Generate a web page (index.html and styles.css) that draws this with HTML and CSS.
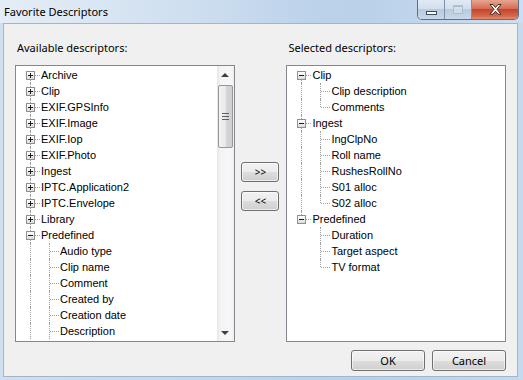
FILE: index.html
```html
<!DOCTYPE html>
<html lang="en">
<head>
    <meta charset="UTF-8">
    <title>Favorite Descriptors</title>
    <link rel="stylesheet" href="styles.css">
</head>
<body>

<div class="window">
    <div class="titlebar">
        <div class="title">Favorite Descriptors</div>
        <div class="caption-buttons">
            <div class="cap-btn cap-min"><span class="min-glyph"></span></div>
            <div class="cap-btn cap-max"><span class="max-glyph"></span></div>
            <div class="cap-btn cap-close">
                <svg width="15" height="13" viewBox="0 0 15 13">
                    <path d="M2 1.5h3l2.5 3 2.5-3h3l-4 4.8 4 4.9h-3l-2.5-3-2.5 3h-3l4-4.9z" fill="#fff" stroke="#4a2a24" stroke-width="1" stroke-linejoin="round"/>
                </svg>
            </div>
        </div>
    </div>

    <div class="client">
        <div class="columns">
            <div class="column">
                <div class="label">Available descriptors:</div>
                <div class="listbox">
                    <div class="tree">
                        <div class="row"><span class="c first"><i class="box plus"></i></span><span class="text">Archive</span></div>
                        <div class="row"><span class="c tee"><i class="box plus"></i></span><span class="text">Clip</span></div>
                        <div class="row"><span class="c tee"><i class="box plus"></i></span><span class="text">EXIF.GPSInfo</span></div>
                        <div class="row"><span class="c tee"><i class="box plus"></i></span><span class="text">EXIF.Image</span></div>
                        <div class="row"><span class="c tee"><i class="box plus"></i></span><span class="text">EXIF.Iop</span></div>
                        <div class="row"><span class="c tee"><i class="box plus"></i></span><span class="text">EXIF.Photo</span></div>
                        <div class="row"><span class="c tee"><i class="box plus"></i></span><span class="text">Ingest</span></div>
                        <div class="row"><span class="c tee"><i class="box plus"></i></span><span class="text">IPTC.Application2</span></div>
                        <div class="row"><span class="c tee"><i class="box plus"></i></span><span class="text">IPTC.Envelope</span></div>
                        <div class="row"><span class="c tee"><i class="box plus"></i></span><span class="text">Library</span></div>
                        <div class="row"><span class="c tee"><i class="box"></i></span><span class="text">Predefined</span></div>
                        <div class="row"><span class="c pipe"></span><span class="c tee"></span><span class="text">Audio type</span></div>
                        <div class="row"><span class="c pipe"></span><span class="c tee"></span><span class="text">Clip name</span></div>
                        <div class="row"><span class="c pipe"></span><span class="c tee"></span><span class="text">Comment</span></div>
                        <div class="row"><span class="c pipe"></span><span class="c tee"></span><span class="text">Created by</span></div>
                        <div class="row"><span class="c pipe"></span><span class="c tee"></span><span class="text">Creation date</span></div>
                        <div class="row"><span class="c pipe"></span><span class="c tee"></span><span class="text">Description</span></div>
                    </div>
                    <div class="scrollbar">
                        <div class="arrow"><span class="tri-up"></span></div>
                        <div class="track">
                            <div class="thumb"><span class="grip"></span></div>
                        </div>
                        <div class="arrow"><span class="tri-down"></span></div>
                    </div>
                </div>
            </div>

            <div class="middle">
                <button class="btn move-btn">&gt;&gt;</button>
                <button class="btn move-btn">&lt;&lt;</button>
            </div>

            <div class="column">
                <div class="label">Selected descriptors:</div>
                <div class="listbox">
                    <div class="tree">
                        <div class="row"><span class="c first"><i class="box"></i></span><span class="text">Clip</span></div>
                        <div class="row"><span class="c pipe"></span><span class="c tee"></span><span class="text">Clip description</span></div>
                        <div class="row"><span class="c pipe"></span><span class="c elbow"></span><span class="text">Comments</span></div>
                        <div class="row"><span class="c tee"><i class="box"></i></span><span class="text">Ingest</span></div>
                        <div class="row"><span class="c pipe"></span><span class="c tee"></span><span class="text">IngClpNo</span></div>
                        <div class="row"><span class="c pipe"></span><span class="c tee"></span><span class="text">Roll name</span></div>
                        <div class="row"><span class="c pipe"></span><span class="c tee"></span><span class="text">RushesRollNo</span></div>
                        <div class="row"><span class="c pipe"></span><span class="c tee"></span><span class="text">S01 alloc</span></div>
                        <div class="row"><span class="c pipe"></span><span class="c elbow"></span><span class="text">S02 alloc</span></div>
                        <div class="row"><span class="c elbow"><i class="box"></i></span><span class="text">Predefined</span></div>
                        <div class="row"><span class="c"></span><span class="c tee"></span><span class="text">Duration</span></div>
                        <div class="row"><span class="c"></span><span class="c tee"></span><span class="text">Target aspect</span></div>
                        <div class="row"><span class="c"></span><span class="c elbow"></span><span class="text">TV format</span></div>
                    </div>
                </div>
            </div>
        </div>

        <div class="footer">
            <button class="btn dlg-btn">OK</button>
            <button class="btn dlg-btn">Cancel</button>
        </div>
    </div>
</div>

</body>
</html>
```

FILE: styles.css
```css
body {
    margin: 0;
    padding: 0;
    background-color: #ffffff;
}

.window {
    width: 523px;
    height: 380px;
    box-sizing: border-box;
    padding: 0 5px 3px 3px;
    display: flex;
    flex-direction: column;
    background: linear-gradient(to right, #cfdff0 0%, #c3d7ec 40%, #b8d0e9 70%, #c6daee 100%);
    font-family: "Segoe UI", "Noto Sans", sans-serif;
}

/* title bar */

.titlebar {
    height: 23px;
    display: flex;
    justify-content: space-between;
    align-items: flex-start;
    background: linear-gradient(to right, rgba(255, 255, 255, 0.45) 0%, rgba(255, 255, 255, 0.25) 25%, rgba(255, 255, 255, 0) 60%, rgba(255, 255, 255, 0.1) 100%);
    margin: 0 -5px 0 -3px;
    padding: 0 4px 0 4px;
}

.title {
    margin-top: 4px;
    font-size: 11px;
    line-height: 16px;
    color: #000000;
}

.caption-buttons {
    display: flex;
    height: 19px;
    border: 1px solid #5c6f86;
    border-top: none;
    border-radius: 0 0 5px 5px;
    overflow: hidden;
}

.cap-btn {
    display: flex;
    justify-content: center;
    align-items: center;
    height: 19px;
    background: linear-gradient(#e1eaf4 0%, #d2dfee 45%, #b9cbe0 50%, #c9d8ea 100%);
    border-right: 1px solid #7d91a8;
}

.cap-min {
    width: 26px;
}

.cap-max {
    width: 26px;
}

.cap-close {
    width: 46px;
    border-right: none;
    background: linear-gradient(#e7a693 0%, #d66e55 45%, #c5442b 50%, #d36a4f 85%, #e48b6f 100%);
}

.min-glyph {
    width: 9px;
    height: 2px;
    margin-top: 6px;
    background-color: #ffffff;
    border: 1px solid #3f4b5a;
}

.max-glyph {
    width: 8px;
    height: 6px;
    border: 1px solid #a9b6c5;
    border-top-width: 2px;
    background-color: #d5e0ec;
    opacity: 0.8;
}

/* client area */

.client {
    flex-grow: 1;
    display: flex;
    flex-direction: column;
    background-color: #f0f0f0;
    border: 1px solid #a3b5c9;
    padding: 16px 11px 0 11px;
}

.columns {
    display: flex;
}

.column {
    width: 220px;
    display: flex;
    flex-direction: column;
}

.label {
    font-size: 11px;
    line-height: 15px;
    height: 15px;
    margin: 0 0 10px 2px;
    color: #000000;
}

.listbox {
    height: 277px;
    box-sizing: border-box;
    border: 1px solid #828790;
    background-color: #ffffff;
    display: flex;
    overflow: hidden;
}

.middle {
    width: 52px;
    display: flex;
    flex-direction: column;
    align-items: center;
    gap: 9px;
    padding-top: 122px;
}

/* tree view */

.tree {
    flex-grow: 1;
    padding: 1px 0 0 5px;
    font-family: "Liberation Sans", Arial, sans-serif;
    font-size: 11px;
    color: #000000;
    overflow: hidden;
}

.row {
    display: flex;
    align-items: center;
    height: 16px;
    white-space: nowrap;
}

.text {
    padding-left: 1px;
}

.c {
    position: relative;
    width: 19px;
    height: 16px;
    flex: none;
}

.pipe::before,
.tee::before,
.elbow::before,
.first::before {
    content: '';
    position: absolute;
    left: 9px;
    top: 0;
    height: 16px;
    border-left: 1px dotted #a0a0a0;
}

.elbow::before {
    height: 8px;
}

.first::before {
    top: 8px;
    height: 8px;
}

.tee::after,
.elbow::after,
.first::after {
    content: '';
    position: absolute;
    left: 10px;
    right: 0;
    top: 8px;
    border-top: 1px dotted #a0a0a0;
}

.box {
    position: absolute;
    left: 5px;
    top: 4px;
    width: 7px;
    height: 7px;
    border: 1px solid #8f8f8f;
    background: linear-gradient(#ffffff, #dcdcdc);
    z-index: 1;
}

.box::before {
    content: '';
    position: absolute;
    left: 1px;
    top: 3px;
    width: 5px;
    height: 1px;
    background-color: #1c1c1c;
}

.box.plus::after {
    content: '';
    position: absolute;
    left: 3px;
    top: 1px;
    width: 1px;
    height: 5px;
    background-color: #1c1c1c;
}

/* scrollbar */

.scrollbar {
    width: 17px;
    flex: none;
    display: flex;
    flex-direction: column;
    background: linear-gradient(to right, #e6e6e6, #f4f4f4 20%, #f7f7f7 80%, #eeeeee);
}

.arrow {
    height: 17px;
    display: flex;
    justify-content: center;
    align-items: center;
}

.tri-up {
    width: 0;
    height: 0;
    border-left: 4px solid transparent;
    border-right: 4px solid transparent;
    border-bottom: 4px solid #404040;
}

.tri-down {
    width: 0;
    height: 0;
    border-left: 4px solid transparent;
    border-right: 4px solid transparent;
    border-top: 4px solid #404040;
}

.track {
    flex-grow: 1;
    padding: 2px 1px 0 1px;
}

.thumb {
    height: 61px;
    border: 1px solid #979797;
    border-radius: 2px;
    background: linear-gradient(to right, #f4f4f4 0%, #e8e8e8 50%, #d6d6d6 51%, #cfcfcf 100%);
    display: flex;
    justify-content: center;
    align-items: center;
}

.grip {
    width: 7px;
    height: 5px;
    border-top: 1px solid #606060;
    border-bottom: 1px solid #606060;
    background: linear-gradient(transparent 2px, #606060 2px, #606060 3px, transparent 3px);
}

/* buttons */

.btn {
    font-family: "Segoe UI", "Noto Sans", sans-serif;
    color: #000000;
    border: 1px solid #707070;
    border-radius: 3px;
    background: linear-gradient(#f2f2f2 0%, #ebebeb 50%, #dddddd 51%, #cfcfcf 100%);
    padding: 0;
    box-shadow: inset 0 0 0 1px rgba(255, 255, 255, 0.6);
}

.move-btn {
    width: 38px;
    height: 20px;
    font-size: 10px;
}

.footer {
    display: flex;
    justify-content: flex-end;
    gap: 7px;
    margin-top: 8px;
}

.dlg-btn {
    width: 74px;
    height: 21px;
    font-size: 11px;
}
```
